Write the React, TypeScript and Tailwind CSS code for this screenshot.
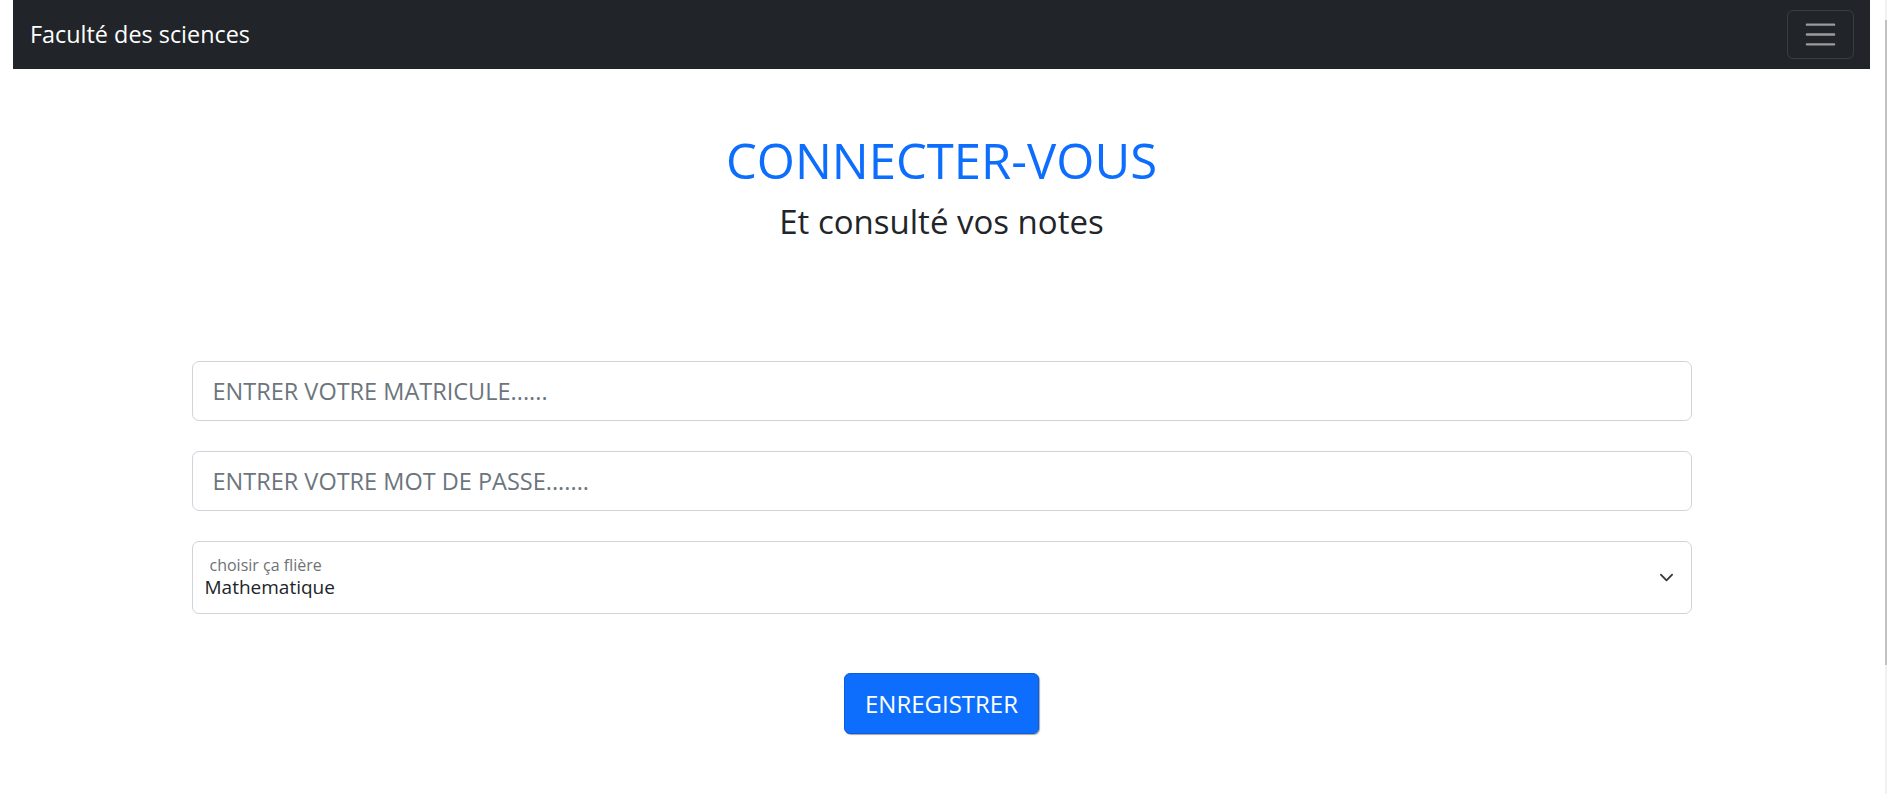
export default function App() {
  return (
    <div className="flex w-[1887px] h-[794px] bg-white font-['Open_Sans','Noto_Sans',sans-serif] overflow-hidden">
      <div className="w-[13px] shrink-0" />
      <div className="w-[1857px] shrink-0 flex flex-col">
        <nav className="h-[69px] shrink-0 bg-[#212529] flex items-center justify-between pl-[17px] pr-[16px]">
          <span className="text-white text-[23.4px] leading-none mt-[1px]">Faculté des sciences</span>
          <button className="w-[67px] h-[49px] rounded-[6px] border border-[#3a3d41] flex items-center justify-center">
            <svg width="37" height="37" viewBox="0 0 30 30">
              <path d="M4 7h22M4 15h22M4 23h22" stroke="rgba(255,255,255,0.55)" strokeWidth="2" strokeLinecap="round" />
            </svg>
          </button>
        </nav>
        <div className="flex flex-col items-center">
          <h1 className="mt-[67px] h-[49px] text-[49px] leading-none text-[#0d6efd] font-normal">CONNECTER-VOUS</h1>
          <h2 className="mt-[20px] h-[33px] text-[33px] leading-none text-[#212529] font-normal">Et consulté vos notes</h2>
          <form className="w-[1500px] mt-[123px] flex flex-col" onSubmit={(e) => e.preventDefault()}>
            <input
              type="text"
              placeholder="ENTRER VOTRE MATRICULE......"
              className="h-[60px] w-full border border-[#ced4da] rounded-[7px] px-[20px] text-[23.5px] text-[#212529] placeholder:text-[#6c757d] outline-none bg-white"
            />
            <input
              type="password"
              placeholder="ENTRER VOTRE MOT DE PASSE......."
              className="mt-[30px] h-[60px] w-full border border-[#ced4da] rounded-[7px] px-[20px] text-[23.5px] text-[#212529] placeholder:text-[#6c757d] outline-none bg-white"
            />
            <div className="mt-[30px] h-[73px] w-full border border-[#ced4da] rounded-[7px] flex items-center bg-white">
              <div className="flex-1 flex flex-col self-stretch pt-[15px]">
                <span className="pl-[17px] text-[16px] leading-none text-[#6f7275]">choisir ça flière</span>
                <span className="pl-[12px] mt-[5px] text-[19px] leading-none text-[#212529]">Mathematique</span>
              </div>
              <svg className="mr-[17px]" width="15" height="15" viewBox="0 0 16 16">
                <path d="m2 5 6 6 6-6" fill="none" stroke="#343a40" strokeWidth="2" strokeLinecap="round" strokeLinejoin="round" />
              </svg>
            </div>
            <div className="mt-[59px] flex justify-center">
              <button
                type="submit"
                className="h-[61px] px-[20px] rounded-[6px] bg-[#0d6efd] border border-[#0b5ed7] text-white text-[24px] leading-none shadow-[1px_1px_1px_rgba(0,0,0,0.35)]"
              >
                ENREGISTRER
              </button>
            </div>
          </form>
        </div>
      </div>
      <div className="w-[17px] shrink-0 flex justify-end">
        <div className="w-[2px] flex flex-col">
          <div className="h-[20px] bg-[#f1f1f1]" />
          <div className="h-[645px] bg-[#c1c1c1]" />
          <div className="flex-1 bg-[#f1f1f1]" />
        </div>
      </div>
    </div>
  );
}
